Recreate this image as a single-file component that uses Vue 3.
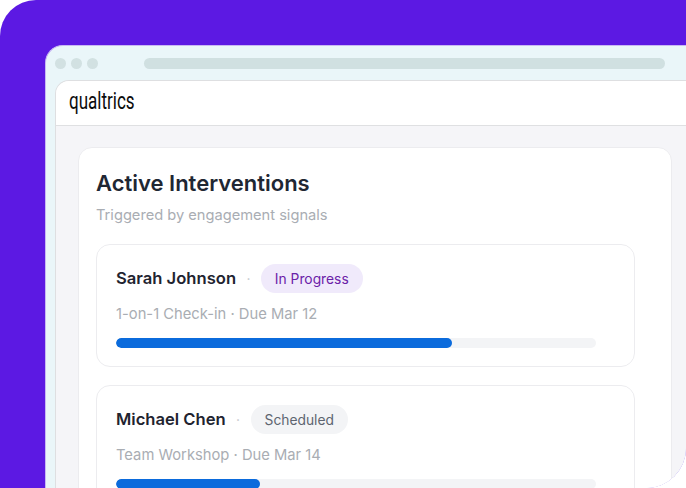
<template>
  <div class="stage">
    <div class="window">
      <div class="chrome">
        <div class="dots">
          <span v-for="n in 3" :key="n" class="dot"></span>
        </div>
        <div class="url"></div>
      </div>
      <div class="panel">
        <header class="topbar">
          <span class="logo">qualtrics</span>
        </header>
        <main class="content">
          <section class="card">
            <h1>Active Interventions</h1>
            <p class="lead">Triggered by engagement signals</p>
            <div class="list">
              <article v-for="item in items" :key="item.name" class="item">
                <div class="row">
                  <span class="name">{{ item.name }}</span>
                  <span class="sep">·</span>
                  <span class="badge" :class="item.kind">{{ item.status }}</span>
                </div>
                <p class="meta">{{ item.meta }}</p>
                <div class="track">
                  <div class="fill" :style="{ width: item.progress + '%' }"></div>
                </div>
              </article>
            </div>
          </section>
        </main>
      </div>
    </div>
  </div>
</template>

<script setup>
const items = [
  { name: 'Sarah Johnson', status: 'In Progress', kind: 'progress', meta: '1-on-1 Check-in · Due Mar 12', progress: 70 },
  { name: 'Michael Chen', status: 'Scheduled', kind: 'scheduled', meta: 'Team Workshop · Due Mar 14', progress: 30 },
];
</script>

<style>
html, body {
  margin: 0;
  background: #fff;
}
</style>

<style scoped>
.stage {
  width: 686px;
  height: 488px;
  box-sizing: border-box;
  padding: 45px 0 0 45px;
  overflow: hidden;
  background: #5c19e3;
  clip-path: inset(0 round 36px 0 40px 0);
  font-family: Inter, "Liberation Sans", sans-serif;
}

.window {
  width: 700px;
  height: 500px;
  box-sizing: border-box;
  padding-left: 9px;
  background: #eaf6f9;
  border: 1px solid #c9b8f3;
  border-right: 0;
  border-bottom: 0;
  border-radius: 18px 0 0 0;
}

.chrome {
  display: flex;
  align-items: center;
  height: 34px;
}

.dots {
  display: flex;
  gap: 5px;
}

.dot {
  width: 11px;
  height: 11px;
  border-radius: 50%;
  background: #d2e1e2;
}

.url {
  width: 521px;
  height: 11px;
  margin-left: 46px;
  border-radius: 6px;
  background: #d0e0e1;
}

.panel {
  height: 460px;
  background: #f5f5f8;
  border-top: 1px solid #dedfe1;
  border-left: 1px solid #dedfe1;
  border-radius: 14px 0 0 0;
  overflow: hidden;
}

.topbar {
  display: flex;
  align-items: center;
  height: 44px;
  padding-left: 13px;
  background: #fff;
  border-bottom: 1px solid #dfe0e2;
}

.logo {
  margin-top: -4px;
  font-family: Roboto, "Liberation Sans", sans-serif;
  font-size: 23px;
  font-weight: 400;
  color: #0c0c0c;
  transform: scaleX(0.74);
  transform-origin: left center;
}

.content {
  padding: 21px 0 0 22px;
}

.card {
  width: 594px;
  box-sizing: border-box;
  padding: 20px 0 0 17px;
  background: #fff;
  border: 1px solid #ececef;
  border-radius: 14px;
}

h1 {
  margin: 0;
  font-size: 22px;
  line-height: 30px;
  font-weight: 600;
  color: #1f2733;
}

.lead {
  margin: 7px 0 0;
  font-size: 14.65px;
  line-height: 20px;
  color: #a9adb3;
}

.list {
  display: flex;
  flex-direction: column;
  gap: 18px;
  margin-top: 19px;
}

.item {
  width: 539px;
  box-sizing: border-box;
  height: 123px;
  padding: 18px 38px 0 19px;
  border: 1px solid #ececef;
  border-radius: 14px;
}

.row {
  display: flex;
  align-items: center;
  height: 30px;
}

.name {
  font-size: 16.6px;
  font-weight: 600;
  color: #1f2430;
}

.sep {
  margin: 0 10.4px;
  font-size: 14px;
  color: #c4c7cc;
}

.badge {
  height: 29px;
  line-height: 30px;
  padding: 0 14px;
  border-radius: 15px;
  font-size: 13.8px;
  font-weight: 400;
}

.progress {
  background: #f0eafb;
  color: #6b21a8;
}

.scheduled {
  background: #f3f4f6;
  color: #5d6470;
}

.meta {
  margin: 11px 0 0;
  font-size: 14.75px;
  line-height: 20px;
  color: #a9adb3;
}

.track {
  width: 480px;
  height: 10px;
  margin-top: 14px;
  border-radius: 5px;
  background: #f3f4f6;
  overflow: hidden;
}

.fill {
  height: 100%;
  border-radius: 5px;
  background: #0b6bdc;
}
</style>
